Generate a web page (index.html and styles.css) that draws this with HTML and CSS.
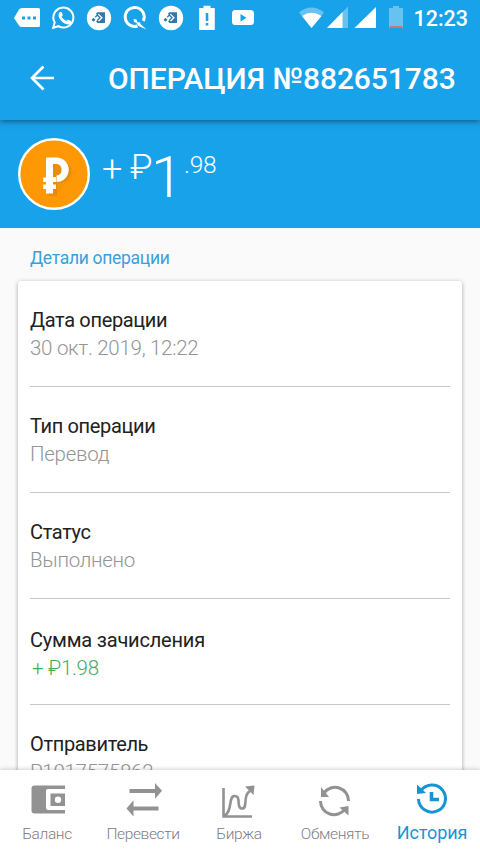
FILE: index.html
```html
<!DOCTYPE html>
<html lang="ru">
<head>
<meta charset="utf-8">
<title>Операция №882651783</title>
<link rel="stylesheet" href="styles.css">
</head>
<body>
<div class="screen">
  <header class="top">
    <div class="status">
      <svg class="status-icons" width="480" height="36" viewBox="0 0 480 36" fill="#fff">
        <path fill-rule="evenodd" d="M14 18l5-8.500q1-1.500 3-1.500h16.500q1.500 0 1.500 1.500v16q0 1.500-1.500 1.500H22q-2 0-3-1.500zM22 16.500v3h3v-3zM27.500 16.500v3h3v-3zM33 16.500v3h3v-3z"/>
        <path d="M53.200 27.800l1.500-5.300a10 10 0 1 1 3.700 3.700z" fill="none" stroke="#fff" stroke-width="2"/>
        <path d="M59.500 12.200q1.500-1 2.300.3l1 2.500q0 .7-1.200 1.800 1.600 3 4.800 4.300l1.500-1.600 3.100 1.500q.8 3.200-3.300 3.500-3.700-.3-7-4.200-3.600-4.500-1.200-8.100z"/>
        <g id="exchange"><circle cx="99" cy="18" r="12.200"/><path fill="#3578a8" fill-rule="evenodd" d="M97.500 12.300h7.500v10.800h-7.500l-1.500-1.600 1.500-1.500 1.500 1.500 3.800-3.800-4-4-1.500 1.500-1.500-1.500zM91.500 19.800l2-2 2 2-2 2z"/><path d="M95.200 17.200l2.200-2.200 2.600 2.700-2.600 2.600" fill="none" stroke="#3578a8" stroke-width="1.300"/></g>
        <path d="M137.500 26a9.500 9.500 0 1 1 5.800-5" fill="none" stroke="#fff" stroke-width="3"/>
        <path d="M133.500 19l3 .5 1 3 2-.5 1.500 2.500 5.500 5-8-3.500-2-3-2.500-1z"/>
        <use href="#exchange" x="72"/>
        <path fill-rule="evenodd" d="M199.200 8h4.300V5.800h7V8h4.300v22h-15.600zM205.700 13v8h2.600v-8zM205.700 23v2.600h2.600V23z"/>
        <path fill-rule="evenodd" d="M235 10h15.500q3.500 0 3.500 3.500v8q0 3.500-3.500 3.500H235q-3 0-3-3.500v-8q0-3.500 3-3.500zM240.500 14v7.500l6-3.700z"/>
        <path opacity=".35" d="M311.500 28L299 12.500q12.500-10 25 0z"/>
        <path d="M311.500 28L302 16q9.500-6.500 19.500 0z"/>
        <path opacity=".35" d="M348 6.500V28h-21z"/><path d="M342.500 12v16H327z"/>
        <path d="M376 7v21h-21.500z"/>
        <path opacity=".35" d="M389 8h4V6h6v2h4v20h-14z"/><path fill="#c77970" d="M389.500 26h13v2h-13z"/>
      </svg>
      <span class="clock">12:23</span>
    </div>
    <div class="bar">
      <svg class="back" width="28" height="28" viewBox="0 0 28 28" fill="none" stroke="#fff" stroke-width="2.700"><path d="M15.500 2.500L4 14l11.500 11.500M4 14h22"/></svg>
      <h1>ОПЕРАЦИЯ №882651783</h1>
    </div>
  </header>
  <section class="hero">
    <svg class="coin" width="72" height="72" viewBox="0 0 72 72">
      <circle cx="36" cy="36" r="34.800" fill="#ff9804" stroke="#fff" stroke-width="2.400"/>
      <path fill="#ed9310" d="M47 23l10 12L38 57l-9-2z" opacity=".55"/>
      <path fill="#c8780a" opacity=".35" d="M29 22h13q12 2 11 13-2 10-14 10v13h-8z"/>
      <path fill="#fff" d="M28 19.500h10.500a12.200 12.200 0 0 1 0 24.500v-6.600a5.800 5.800 0 0 0 0-11.500H35V39h3v5h-3v2.500h3v4.500h-3v4.500h-7V51h-2.800v-4.500H28V44h-2.800v-4.500H28z"/>
    </svg>
    <div class="amount"><span class="plus">+</span><span class="sign">₽</span><span class="whole">1</span><span class="cents">.98</span></div>
  </section>
  <main class="content">
    <h2>Детали операции</h2>
    <div class="card">
      <div class="row"><div class="label">Дата операции</div><div class="value">30 окт. 2019, 12:22</div></div>
      <div class="row"><div class="label">Тип операции</div><div class="value">Перевод</div></div>
      <div class="row"><div class="label">Статус</div><div class="value">Выполнено</div></div>
      <div class="row sum"><div class="label">Сумма зачисления</div><div class="value income">+ ₽1.98</div></div>
      <div class="row"><div class="label">Отправитель</div><div class="value">P1017575862</div></div>
    </div>
  </main>
  <nav class="tabs">
    <div class="tab"><svg width="40" height="40" viewBox="0 0 40 40" fill="#929292"><path d="M10 5.500h28V9H21q-2 0-2 2v17q0 2 2 2h17v3.500H7.500q-3 0-3-3v-22q0-3 3-3z"/><path fill-rule="evenodd" d="M23.500 13.500H38V26H23.500zM31 16.500a3.200 3.200 0 1 0 0 6.400 3.200 3.200 0 0 0 0-6.400z"/></svg><span>Баланс</span></div>
    <div class="tab"><svg width="40" height="40" viewBox="0 0 40 40" fill="#929292"><path d="M6.500 9H32V3l7 7.700-7 8V13H6.500zM35.500 26.500H10.500v-6.200L3.500 28.500l7 8v-6h25z"/></svg><span>Перевести</span></div>
    <div class="tab"><svg width="40" height="40" viewBox="0 0 40 40" fill="none" stroke="#929292" stroke-width="2.600"><path d="M4.500 8v28.500H33M5 36c9-4 4-20 10.500-20 7.500 0 1 12.500 7.500 12.500C29.500 28.500 23 15 31 11"/><path stroke="none" fill="#929292" d="M26 6.500l9.500-1-1 9.500z"/></svg><span>Биржа</span></div>
    <div class="tab"><svg width="40" height="40" viewBox="0 0 40 40" fill="none" stroke="#929292" stroke-width="3"><path d="M9 13a13.500 13.500 0 0 1 24.500 8M5.500 21A13.500 13.500 0 0 0 30 29"/><path stroke="none" fill="#929292" d="M6 7v10h8zM33.500 26v9.500l-9-8z"/></svg><span>Обменять</span></div>
    <div class="tab active"><svg width="40" height="40" viewBox="0 0 40 40" fill="none" stroke="#1795d3" stroke-width="3"><path d="M8.500 11.500A13.500 13.500 0 1 1 6.500 19"/><path stroke="none" fill="#1795d3" d="M5 4.500v9.500l9-1z"/><path stroke-width="3.600" d="M19.500 12v7.500H27"/></svg><span>История</span></div>
  </nav>
</div>
</body>
</html>
```
FILE: styles.css
```css
* { box-sizing: border-box; }
body { margin: 0; font-family: Roboto, "Noto Sans", sans-serif; background: #fafafa; }
.screen { width: 480px; height: 854px; display: flex; flex-direction: column; overflow: hidden; }
.top { height: 120px; flex: none; background: #18a2e9; color: #fff; position: relative; z-index: 1; box-shadow: 0 1px 6px rgba(0, 0, 0, .5); }
.status { height: 36px; display: grid; }
.status-icons, .clock { grid-area: 1 / 1; }
.clock { justify-self: end; align-self: center; margin: 1px 12px 0 0; font-size: 21.500px; font-weight: 500; line-height: 36px; }
.bar { height: 84px; display: flex; align-items: center; padding-left: 28px; }
h1 { margin: 0 0 0 52px; font-size: 30px; font-weight: 500; white-space: nowrap; letter-spacing: -.08px; }
.hero { height: 108px; flex: none; background: #18a2e9; color: #fff; display: flex; padding: 18px; }
.amount { display: flex; align-items: flex-start; font-weight: 300; margin-left: 12px; line-height: 1; }
.plus { font-size: 36px; margin-top: 13px; width: 28px; }
.sign { font-size: 35px; margin-top: 12px; width: 21px; }
.whole { font-size: 58px; margin-top: 10px; width: 33px; }
.cents { font-size: 24.500px; margin-top: 15px; letter-spacing: -.2px; }
.content { flex: 1; min-height: 0; padding: 0 18px; overflow: hidden; }
h2 { margin: 0; padding: 18px 12px 0; height: 53px; font-size: 17.500px; line-height: 24px; font-weight: 400; letter-spacing: -.3px; color: #3a9fdb; }
.card { background: #fff; border-radius: 3px; box-shadow: 0 1px 4px rgba(0, 0, 0, .35); padding: 0 12px; }
.row { height: 106px; padding-top: 25px; border-bottom: 1px solid #c8c8c8; line-height: 28px; }
.label { font-size: 20px; color: #212121; letter-spacing: -.34px; }
.value { font-size: 20.500px; color: #949494; font-weight: 300; letter-spacing: -.28px; }
.sum { padding-top: 28px; }
.sum .label { line-height: 27px; letter-spacing: -.2px; }
.income { color: #43ad5e; padding-left: 2px; }
.tabs { height: 84px; flex: none; background: #fff; display: grid; grid-template-columns: repeat(5, 1fr); position: relative; box-shadow: 0 -1px 4px rgba(0, 0, 0, .18); }
.tab { display: flex; flex-direction: column; align-items: center; padding: 10px 2px 0 0; font-size: 15.500px; line-height: 28px; font-weight: 300; letter-spacing: -.35px; color: #808080; }
.tab svg { flex: none; }
.active { font-size: 18px; color: #1795d3; padding: 10px 0 0; line-height: 26px; letter-spacing: -.1px; font-weight: 400; }
```
